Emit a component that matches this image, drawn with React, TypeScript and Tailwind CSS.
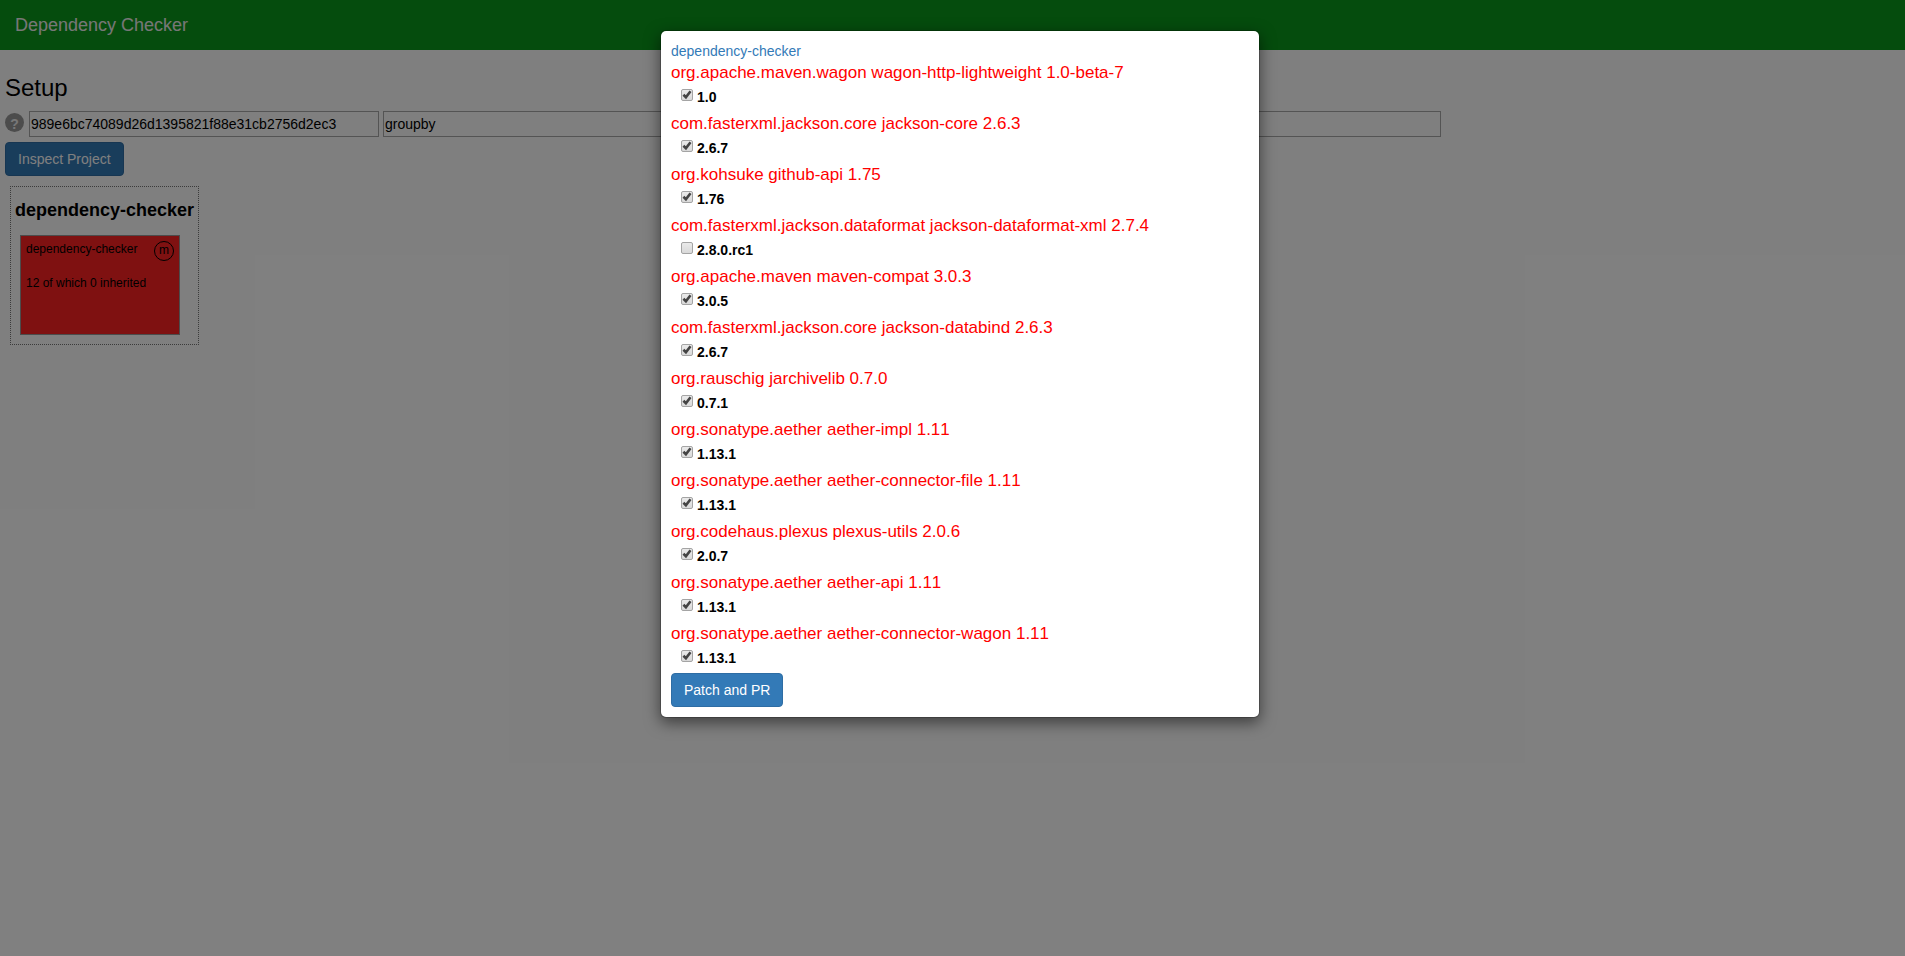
type Dep = { name: string; version: string; checked: boolean };

const deps: Dep[] = [
  { name: "org.apache.maven.wagon wagon-http-lightweight 1.0-beta-7", version: "1.0", checked: true },
  { name: "com.fasterxml.jackson.core jackson-core 2.6.3", version: "2.6.7", checked: true },
  { name: "org.kohsuke github-api 1.75", version: "1.76", checked: true },
  { name: "com.fasterxml.jackson.dataformat jackson-dataformat-xml 2.7.4", version: "2.8.0.rc1", checked: false },
  { name: "org.apache.maven maven-compat 3.0.3", version: "3.0.5", checked: true },
  { name: "com.fasterxml.jackson.core jackson-databind 2.6.3", version: "2.6.7", checked: true },
  { name: "org.rauschig jarchivelib 0.7.0", version: "0.7.1", checked: true },
  { name: "org.sonatype.aether aether-impl 1.11", version: "1.13.1", checked: true },
  { name: "org.sonatype.aether aether-connector-file 1.11", version: "1.13.1", checked: true },
  { name: "org.codehaus.plexus plexus-utils 2.0.6", version: "2.0.7", checked: true },
  { name: "org.sonatype.aether aether-api 1.11", version: "1.13.1", checked: true },
  { name: "org.sonatype.aether aether-connector-wagon 1.11", version: "1.13.1", checked: true },
];

function Checkbox({ checked }: { checked: boolean }) {
  return (
    <span
      role="checkbox"
      aria-checked={checked}
      className="mt-[2px] block h-3 w-3 rounded-[2px] border border-[#a4a4a4] bg-linear-to-b from-[#eaeaea] to-[#d9d9d9]"
    >
      {checked && (
        <svg viewBox="0 0 10 10" className="block h-[10px] w-[10px]">
          <path d="M1.4 4.8 L3.9 7.2 L8.5 1.2" fill="none" stroke="#444" strokeWidth="2.6" />
        </svg>
      )}
    </span>
  );
}

function DepRow({ dep }: { dep: Dep }) {
  return (
    <div className="h-[51px]">
      <h4 className="h-[26px] text-[17px] leading-[24px] whitespace-nowrap text-[#ff0000] [font-kerning:none]">
        {dep.name}
      </h4>
      <label className="flex items-start gap-1 pl-[10px]">
        <Checkbox checked={dep.checked} />
        <span className="pt-[2px] text-[14px] leading-4 font-bold text-black">{dep.version}</span>
      </label>
    </div>
  );
}

function Field({ value }: { value: string }) {
  return (
    <input
      type="text"
      defaultValue={value}
      className="h-[26px] w-[350px] border border-[#a9a9a9] bg-white px-px text-[14px] text-black"
    />
  );
}

function BlueButton({ children }: { children: string }) {
  return (
    <button className="block h-[34px] rounded-[4px] border border-[#2e6da4] bg-[#337ab7] px-3 text-[14px] leading-5 text-white">
      {children}
    </button>
  );
}

export default function App() {
  return (
    <div className="relative h-[956px] w-full overflow-hidden bg-white font-['Liberation_Sans',Arial,sans-serif] text-black">
      <header className="flex h-[50px] items-center bg-[#0b991b] px-[15px] text-[18px] leading-5 text-[#eeeeee]">
        Dependency Checker
      </header>
      <main className="px-[5px] pt-[25px]">
        <h3 className="h-9 text-[24px] leading-[26px]">Setup</h3>
        <div className="flex gap-1">
          <span className="mt-[2px] mr-px flex h-[19px] w-[19px] items-center justify-center rounded-full bg-[#999999] pt-[2px] text-[14px] leading-none font-bold text-[#eeeeee]">
            ?
          </span>
          <Field value="989e6bc74089d26d1395821f88e31cb2756d2ec3" />
          <Field value="groupby" />
          <Field value="" />
          <Field value="" />
        </div>
        <div className="mt-[5px]">
          <BlueButton>Inspect Project</BlueButton>
        </div>
        <section className="mt-[10px] ml-[5px] h-[159px] w-[189px] border border-dotted border-[#777777] px-1 pt-[13px]">
          <h4 className="h-[35px] text-[18px] leading-5 font-bold whitespace-nowrap">dependency-checker</h4>
          <div className="ml-[5px] h-[100px] w-[160px] border border-[#999999] bg-[#ff2222] px-[5px] pt-[5px] text-[12px] leading-[17px]">
            <div className="flex h-[34px] items-start justify-between">
              <span>dependency-checker</span>
              <span className="flex h-5 w-5 items-center justify-center rounded-full border border-black pb-[2px]">m</span>
            </div>
            <div>12 of which 0 inherited</div>
          </div>
        </section>
      </main>
      <div className="absolute inset-0 flex items-start justify-center bg-black/50 pt-[30px] pl-[15px]">
        <div className="w-[600px] rounded-[6px] border border-black/20 bg-white bg-clip-padding p-[10px] shadow-[0_5px_15px_rgba(0,0,0,0.5)]">
          <a className="block h-5 text-[14px] leading-5 text-[#337ab7]">dependency-checker</a>
          {deps.map((d) => (
            <DepRow key={d.name} dep={d} />
          ))}
          <BlueButton>Patch and PR</BlueButton>
        </div>
      </div>
    </div>
  );
}
